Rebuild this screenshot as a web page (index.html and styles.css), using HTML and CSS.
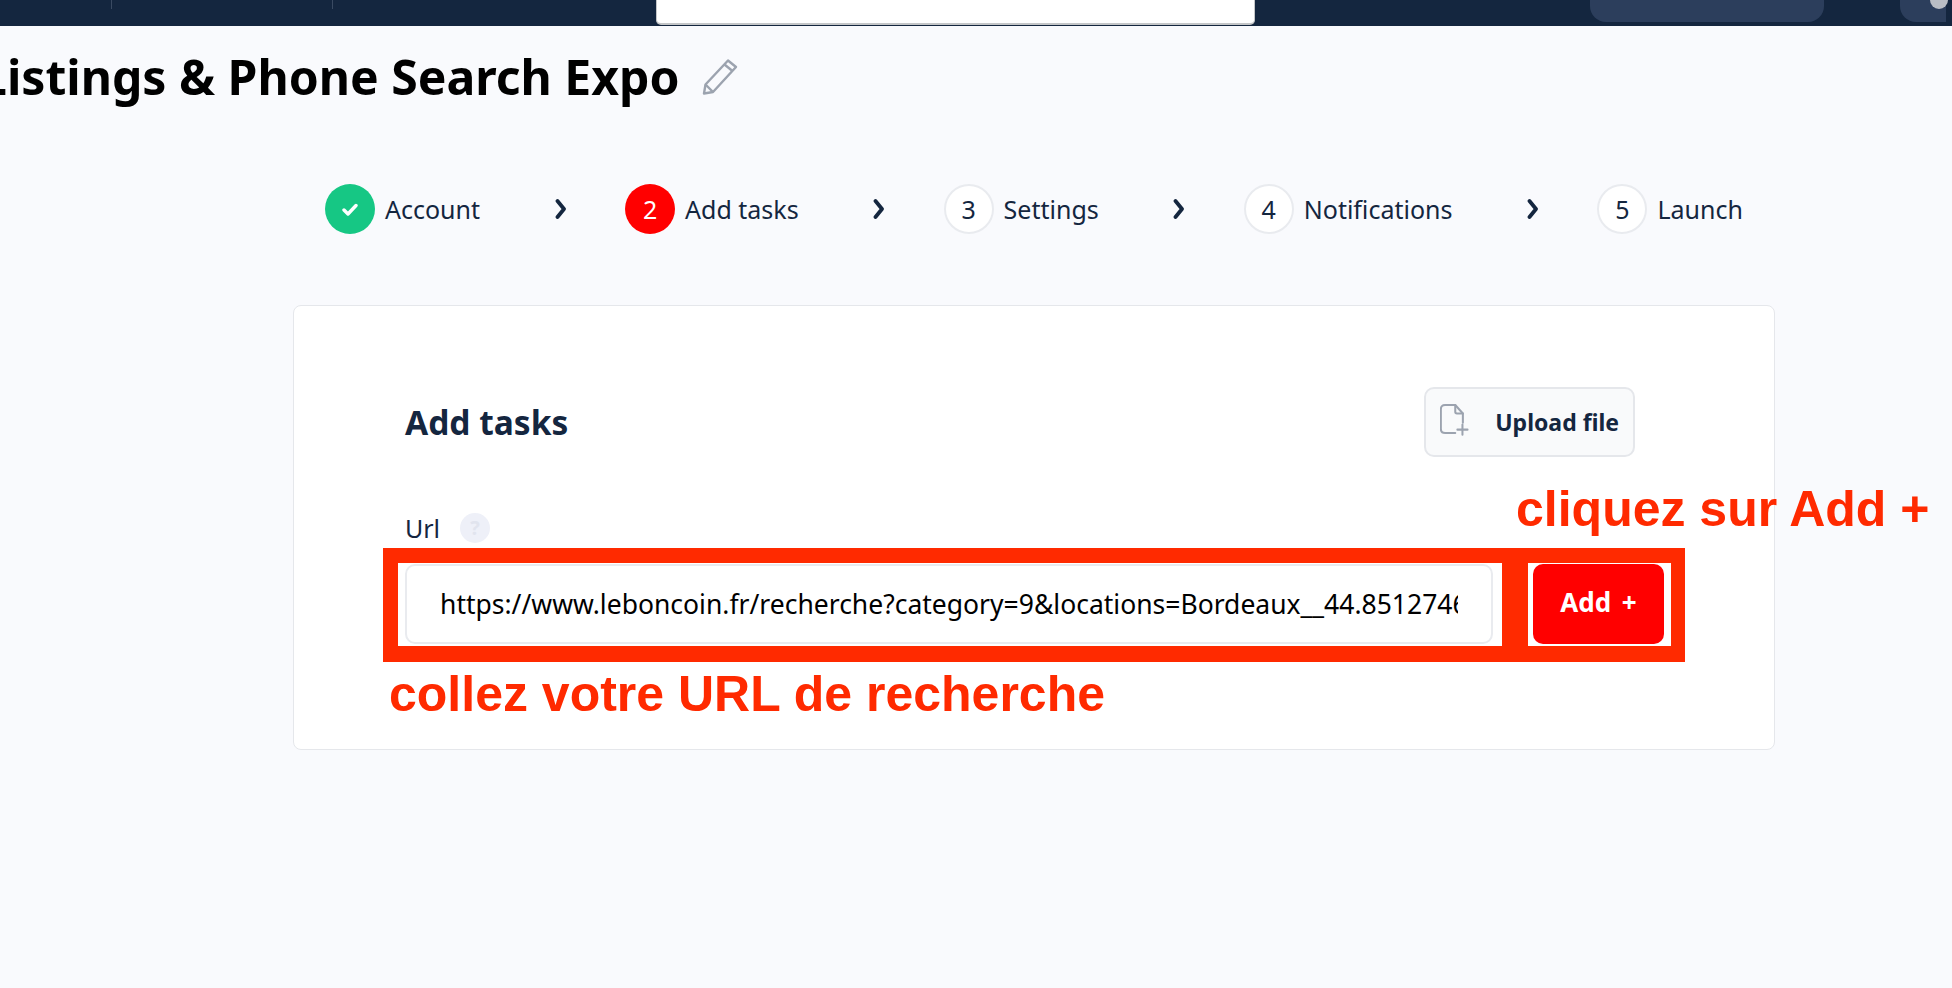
FILE: index.html
```html
<!DOCTYPE html>
<html lang="en">
<head>
    <meta charset="UTF-8">
    <meta name="viewport" content="width=device-width, initial-scale=1.0">
    <title>Listings & Phone Search Expo</title>
    <link rel="stylesheet" href="styles.css">
</head>
<body>
    <header class="topbar">
        <span class="topbar-sep topbar-sep-first"></span>
        <span class="topbar-sep topbar-sep-second"></span>
        <div class="topbar-search"></div>
        <div class="topbar-pill"></div>
        <div class="topbar-avatar"><span class="topbar-dot"></span></div>
    </header>

    <div class="title-row">
        <h1 class="title">Listings &amp; Phone Search Expo</h1>
        <svg class="title-edit" width="38" height="38" viewBox="0 0 38 38" fill="none" stroke="#9ca3af" stroke-width="2.4" stroke-linejoin="round">
            <path d="M27 3.5 L35 10 L12 35 L3 36.5 L4.5 27.5 Z"/>
            <path d="M23.5 7.5 L31.5 14"/>
            <path d="M4.5 27.5 L12 35"/>
        </svg>
    </div>

    <div class="content">
        <nav class="steps">
            <div class="step">
                <span class="step-num step-done">
                    <svg width="16" height="13" viewBox="0 0 16 13" fill="none" stroke="#fff" stroke-width="3.4" stroke-linecap="round" stroke-linejoin="round"><path d="M2 7 L6 11 L14 2.5"/></svg>
                </span>
                <span>Account</span>
            </div>
            <svg class="step-arrow" width="12" height="22" viewBox="0 0 12 22" fill="none" stroke="#14263f" stroke-width="3.8" stroke-linecap="round" stroke-linejoin="round"><path d="M2.5 3 L9 11 L2.5 19"/></svg>
            <div class="step">
                <span class="step-num step-active">2</span>
                <span>Add tasks</span>
            </div>
            <svg class="step-arrow" width="12" height="22" viewBox="0 0 12 22" fill="none" stroke="#14263f" stroke-width="3.8" stroke-linecap="round" stroke-linejoin="round"><path d="M2.5 3 L9 11 L2.5 19"/></svg>
            <div class="step">
                <span class="step-num">3</span>
                <span>Settings</span>
            </div>
            <svg class="step-arrow" width="12" height="22" viewBox="0 0 12 22" fill="none" stroke="#14263f" stroke-width="3.8" stroke-linecap="round" stroke-linejoin="round"><path d="M2.5 3 L9 11 L2.5 19"/></svg>
            <div class="step">
                <span class="step-num">4</span>
                <span>Notifications</span>
            </div>
            <svg class="step-arrow" width="12" height="22" viewBox="0 0 12 22" fill="none" stroke="#14263f" stroke-width="3.8" stroke-linecap="round" stroke-linejoin="round"><path d="M2.5 3 L9 11 L2.5 19"/></svg>
            <div class="step">
                <span class="step-num">5</span>
                <span>Launch</span>
            </div>
        </nav>

        <section class="card">
            <div class="card-head">
                <h2 class="card-title">Add tasks</h2>
                <button class="upload-btn">
                    <svg width="38" height="42" viewBox="0 0 38 42" fill="none" stroke="#9ca3af" stroke-width="2.4" stroke-linecap="round" stroke-linejoin="round">
                        <path d="M27 22 V11 L18 1 H6 Q1 1 1 6 V29 Q1 34 6 34 H18"/>
                        <path d="M18 1 V9 Q18 11 20 11 H27"/>
                        <path d="M26.5 24 V36 M20.5 30 H32.5"/>
                    </svg>
                    <span>Upload file</span>
                </button>
            </div>

            <div class="field-label">
                <label for="url">Url</label>
                <span class="help">?</span>
            </div>

            <div class="url-row">
                <input class="url-input" id="url" type="text" value="https://www.leboncoin.fr/recherche?category=9&locations=Bordeaux__44.85127464">
                <button class="add-btn">Add +</button>
            </div>

            <!-- annotations drawn over the screenshot -->
            <div class="mark-frame"><span class="mark-split"></span></div>
            <p class="mark-text mark-add">cliquez sur Add +</p>
            <p class="mark-text mark-url">collez votre URL de recherche</p>
        </section>
    </div>
</body>
</html>
```

FILE: styles.css
```css
body {
    font-family: "Noto Sans", "Open Sans", sans-serif;
    margin: 0;
    height: 988px;
    overflow: hidden;
    background-color: #f9fafd;
    color: #14263f;
}
.topbar {
    display: flex;
    align-items: flex-start;
    height: 26px;
    background-color: #14263f;
}
.topbar > * {
    flex: none;
}
.topbar-sep {
    width: 1px;
    height: 9px;
    background-color: #3a4a62;
}
.topbar-sep-first {
    margin-left: 111px;
}
.topbar-sep-second {
    margin-left: 220px;
}
.topbar-search {
    width: 599px;
    height: 25px;
    margin-left: 323px;
    box-sizing: border-box;
    background-color: #fff;
    border-bottom: 2px solid #c4c6c8;
    border-left: 1px solid #c4c6c8;
    border-right: 1px solid #c4c6c8;
    border-radius: 0 0 5px 5px;
}
.topbar-pill {
    width: 234px;
    height: 22px;
    margin-left: 335px;
    background-color: #2c3e5c;
    border-radius: 0 0 16px 16px;
}
.topbar-avatar {
    width: 46px;
    height: 22px;
    margin-left: 76px;
    background-color: #2c3e5c;
    border-radius: 0 0 0 16px;
}
.topbar-dot {
    display: block;
    width: 18px;
    height: 9px;
    margin-left: 30px;
    background-color: #b9bdc4;
    border-radius: 0 0 9px 9px;
}
.title-row {
    display: flex;
    align-items: center;
    gap: 21px;
    height: 100px;
    margin-left: -20px;
}
.title {
    margin: 0;
    font-size: 48.1px;
    font-weight: 700;
    color: #000;
    white-space: nowrap;
}
.content {
    width: 1482px;
    margin-left: 293px;
}
.steps {
    display: flex;
    align-items: center;
    justify-content: space-between;
    height: 50px;
    padding: 0 32px;
    margin-top: 58px;
    font-size: 25px;
}
.step {
    display: flex;
    align-items: center;
    gap: 10px;
}
.step-arrow {
    margin: 0 -8px 0 8px;
}
.step-num {
    display: flex;
    align-items: center;
    justify-content: center;
    width: 50px;
    height: 50px;
    box-sizing: border-box;
    border: 2px solid #e9ebef;
    border-radius: 50%;
    background-color: #fff;
}
.step-done {
    background-color: #16c784;
    border: none;
}
.step-active {
    background-color: #ff0000;
    border: none;
    color: #fff;
}
.card {
    position: relative;
    margin-top: 71px;
    padding: 81px 110px 105px 111px;
    background-color: #fff;
    border: 1px solid #e5e7eb;
    border-radius: 8px;
}
.card-head {
    display: flex;
    align-items: center;
    justify-content: space-between;
    margin-right: 29px;
    margin-bottom: 56px;
}
.card-title {
    margin: 0;
    font-size: 33.5px;
    font-weight: 700;
}
.upload-btn {
    display: flex;
    align-items: center;
    gap: 23px;
    height: 70px;
    width: 211px;
    padding: 0 14px;
    box-sizing: border-box;
    background-color: #f9fafb;
    border: 2px solid #e5e7eb;
    border-radius: 10px;
    font-family: inherit;
    font-size: 23px;
    font-weight: 700;
    color: #14263f;
    white-space: nowrap;
}
.field-label {
    display: flex;
    align-items: center;
    gap: 20px;
    height: 30px;
    margin-bottom: 21px;
    font-size: 25px;
}
.help {
    width: 30px;
    height: 30px;
    border-radius: 50%;
    background-color: #eef0f8;
    color: #e1e4ee;
    font-size: 20px;
    font-weight: 700;
    line-height: 30px;
    text-align: center;
}
.url-row {
    display: flex;
    gap: 40px;
}
.url-input {
    flex: 1;
    min-width: 0;
    height: 80px;
    padding: 0 33px 0 33px;
    box-sizing: border-box;
    background-color: #fff;
    border: 2px solid #e9ebef;
    border-radius: 10px;
    font-family: inherit;
    font-size: 26.5px;
    color: #000;
}
.add-btn {
    width: 131px;
    height: 80px;
    padding-bottom: 6px;
    background-color: #ff0000;
    border: none;
    border-radius: 10px;
    font-family: inherit;
    font-size: 26px;
    font-weight: 700;
    word-spacing: 4px;
    color: #fff;
}
.mark-frame {
    position: absolute;
    left: 89px;
    top: 242px;
    width: 1302px;
    height: 114px;
    box-sizing: border-box;
    border: solid #ff2a00;
    border-width: 15px 14px 16px 15px;
}
.mark-split {
    position: absolute;
    left: 1104px;
    top: 0;
    width: 26px;
    height: 100%;
    background-color: #ff2a00;
}
.mark-text {
    position: absolute;
    margin: 0;
    font-family: "Liberation Sans", Arial, sans-serif;
    font-size: 50px;
    font-weight: 700;
    line-height: 56px;
    color: #ff2a00;
    white-space: nowrap;
}
.mark-add {
    left: 1222px;
    top: 175px;
}
.mark-url {
    left: 95px;
    top: 360px;
}
```
